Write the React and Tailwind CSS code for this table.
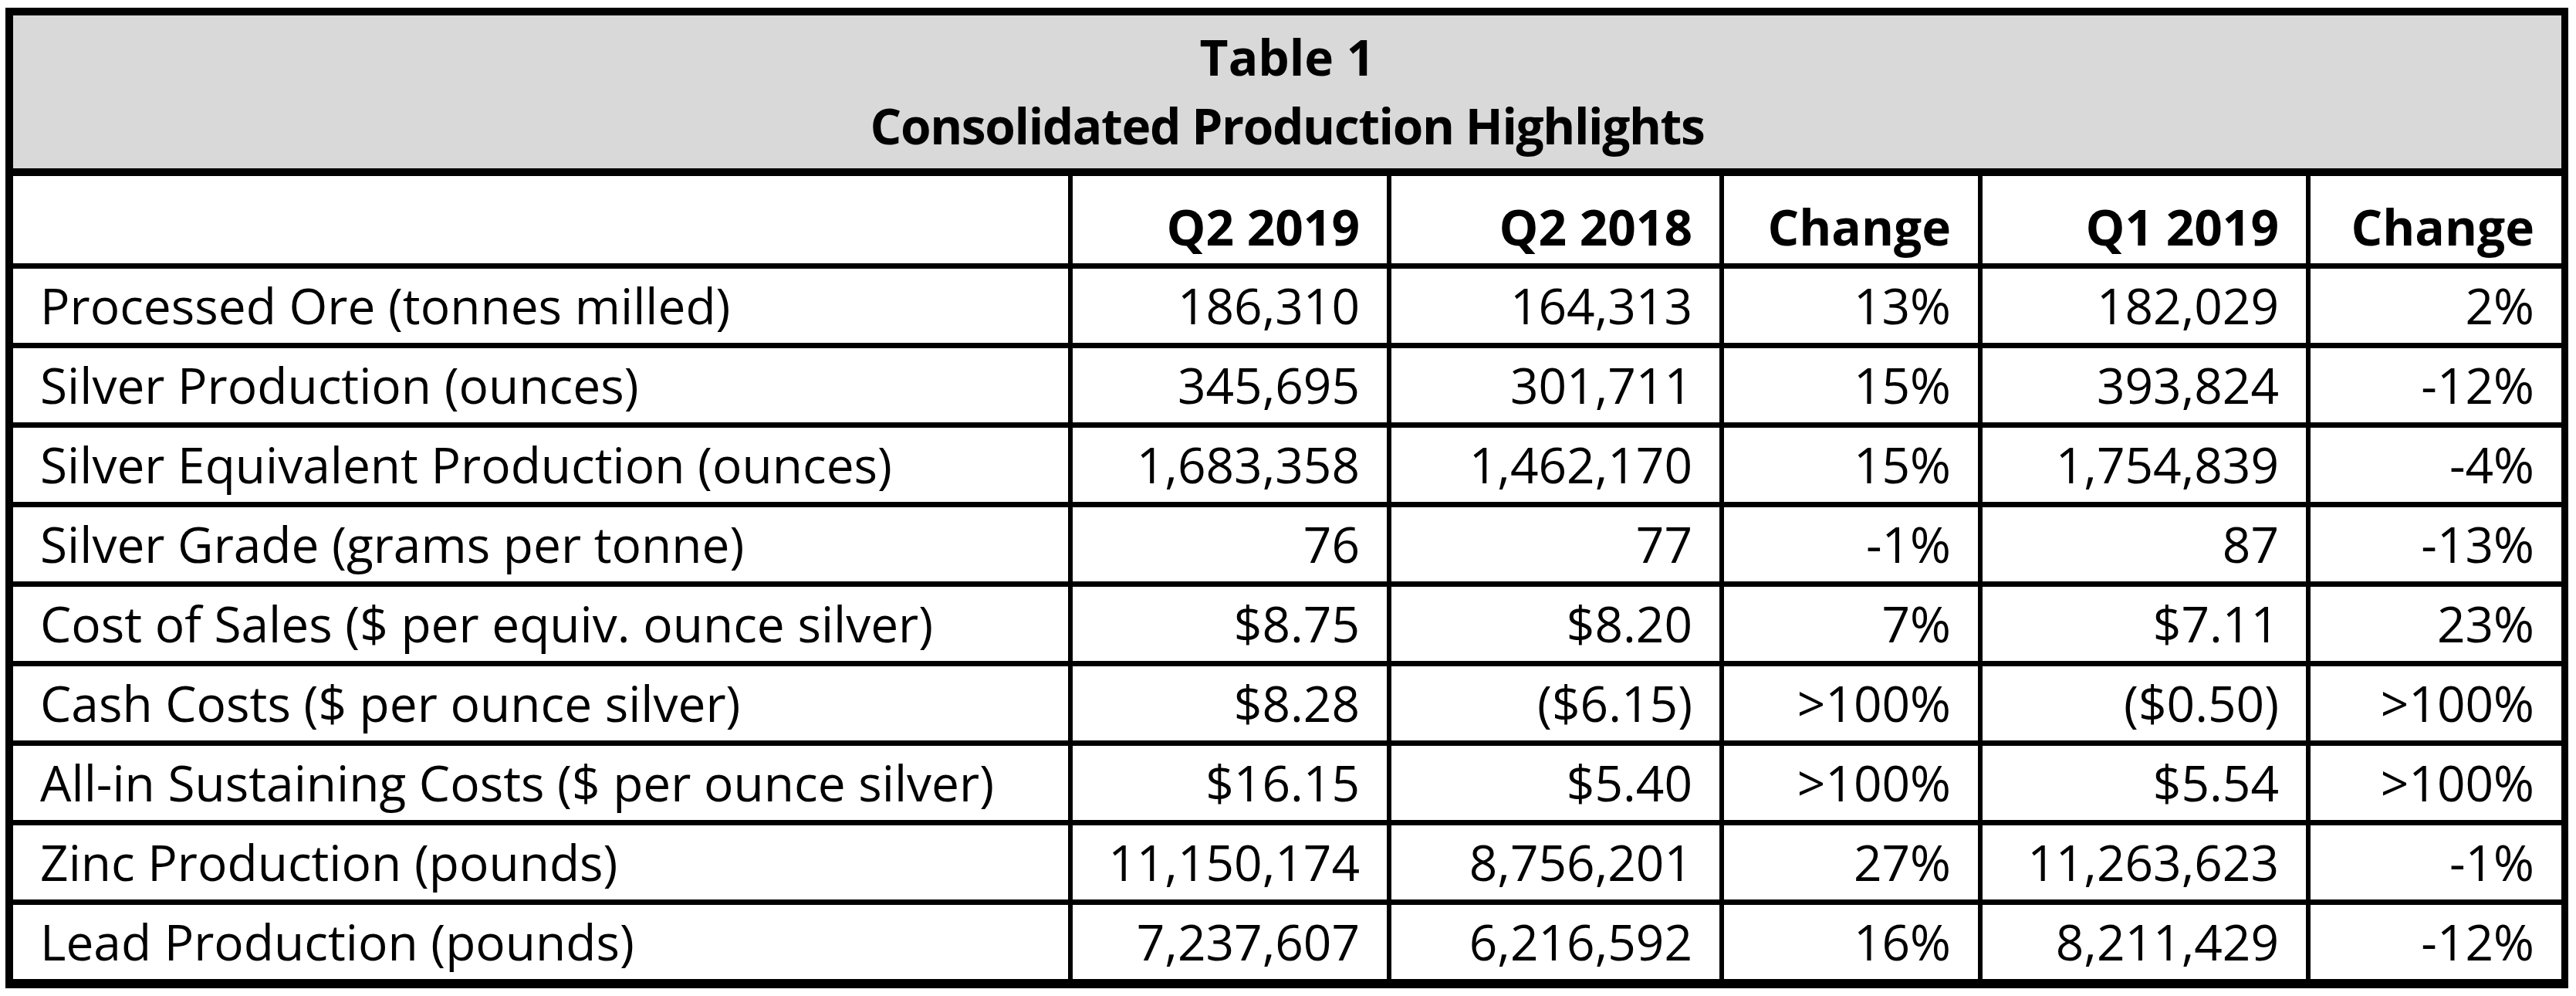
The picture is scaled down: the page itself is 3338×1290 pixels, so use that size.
const columns = ['Q2 2019', 'Q2 2018', 'Change', 'Q1 2019', 'Change'];

const rows = [
  ['Processed Ore (tonnes milled)', '186,310', '164,313', '13%', '182,029', '2%'],
  ['Silver Production (ounces)', '345,695', '301,711', '15%', '393,824', '-12%'],
  ['Silver Equivalent Production (ounces)', '1,683,358', '1,462,170', '15%', '1,754,839', '-4%'],
  ['Silver Grade (grams per tonne)', '76', '77', '-1%', '87', '-13%'],
  ['Cost of Sales ($ per equiv. ounce silver)', '$8.75', '$8.20', '7%', '$7.11', '23%'],
  ['Cash Costs ($ per ounce silver)', '$8.28', '($6.15)', '>100%', '($0.50)', '>100%'],
  ['All-in Sustaining Costs ($ per ounce silver)', '$16.15', '$5.40', '>100%', '$5.54', '>100%'],
  ['Zinc Production (pounds)', '11,150,174', '8,756,201', '27%', '11,263,623', '-1%'],
  ['Lead Production (pounds)', '7,237,607', '6,216,592', '16%', '8,211,429', '-12%'],
];

const grid = 'grid grid-cols-[1367px_413px_431px_335px_425px_331px]';

function App() {
  return (
    <div className="min-h-screen bg-white pl-[7px] pt-[10px] font-['Open_Sans',sans-serif] text-[64px] text-black">
      <div className="w-[3321px] border-[10px] border-r-[9px] border-b-[12px] border-black">
        <div className="bg-[#d9d9d9] pt-[9px] pb-[11px] text-center font-bold leading-[89px]">
          <div>Table 1</div>
          <div className="tracking-[-1.4px]">Consolidated Production Highlights</div>
        </div>

        <div className={`${grid} h-[123px] border-t-[10px] border-black font-bold leading-none`}>
          <div />
          {columns.map((col, i) => (
            <div key={i} className="flex items-end justify-end border-l-[6px] border-black pr-[35px] pb-[15px]">
              {col}
            </div>
          ))}
        </div>

        {rows.map((row) => (
          <div key={row[0]} className={`${grid} h-[103px] border-t-[7px] border-black leading-none`}>
            <div className="flex items-center pl-[35px]">{row[0]}</div>
            {row.slice(1).map((val, i) => (
              <div key={i} className="flex items-center justify-end border-l-[6px] border-black pr-[35px]">
                {val}
              </div>
            ))}
          </div>
        ))}
      </div>
    </div>
  );
}

export default App;
